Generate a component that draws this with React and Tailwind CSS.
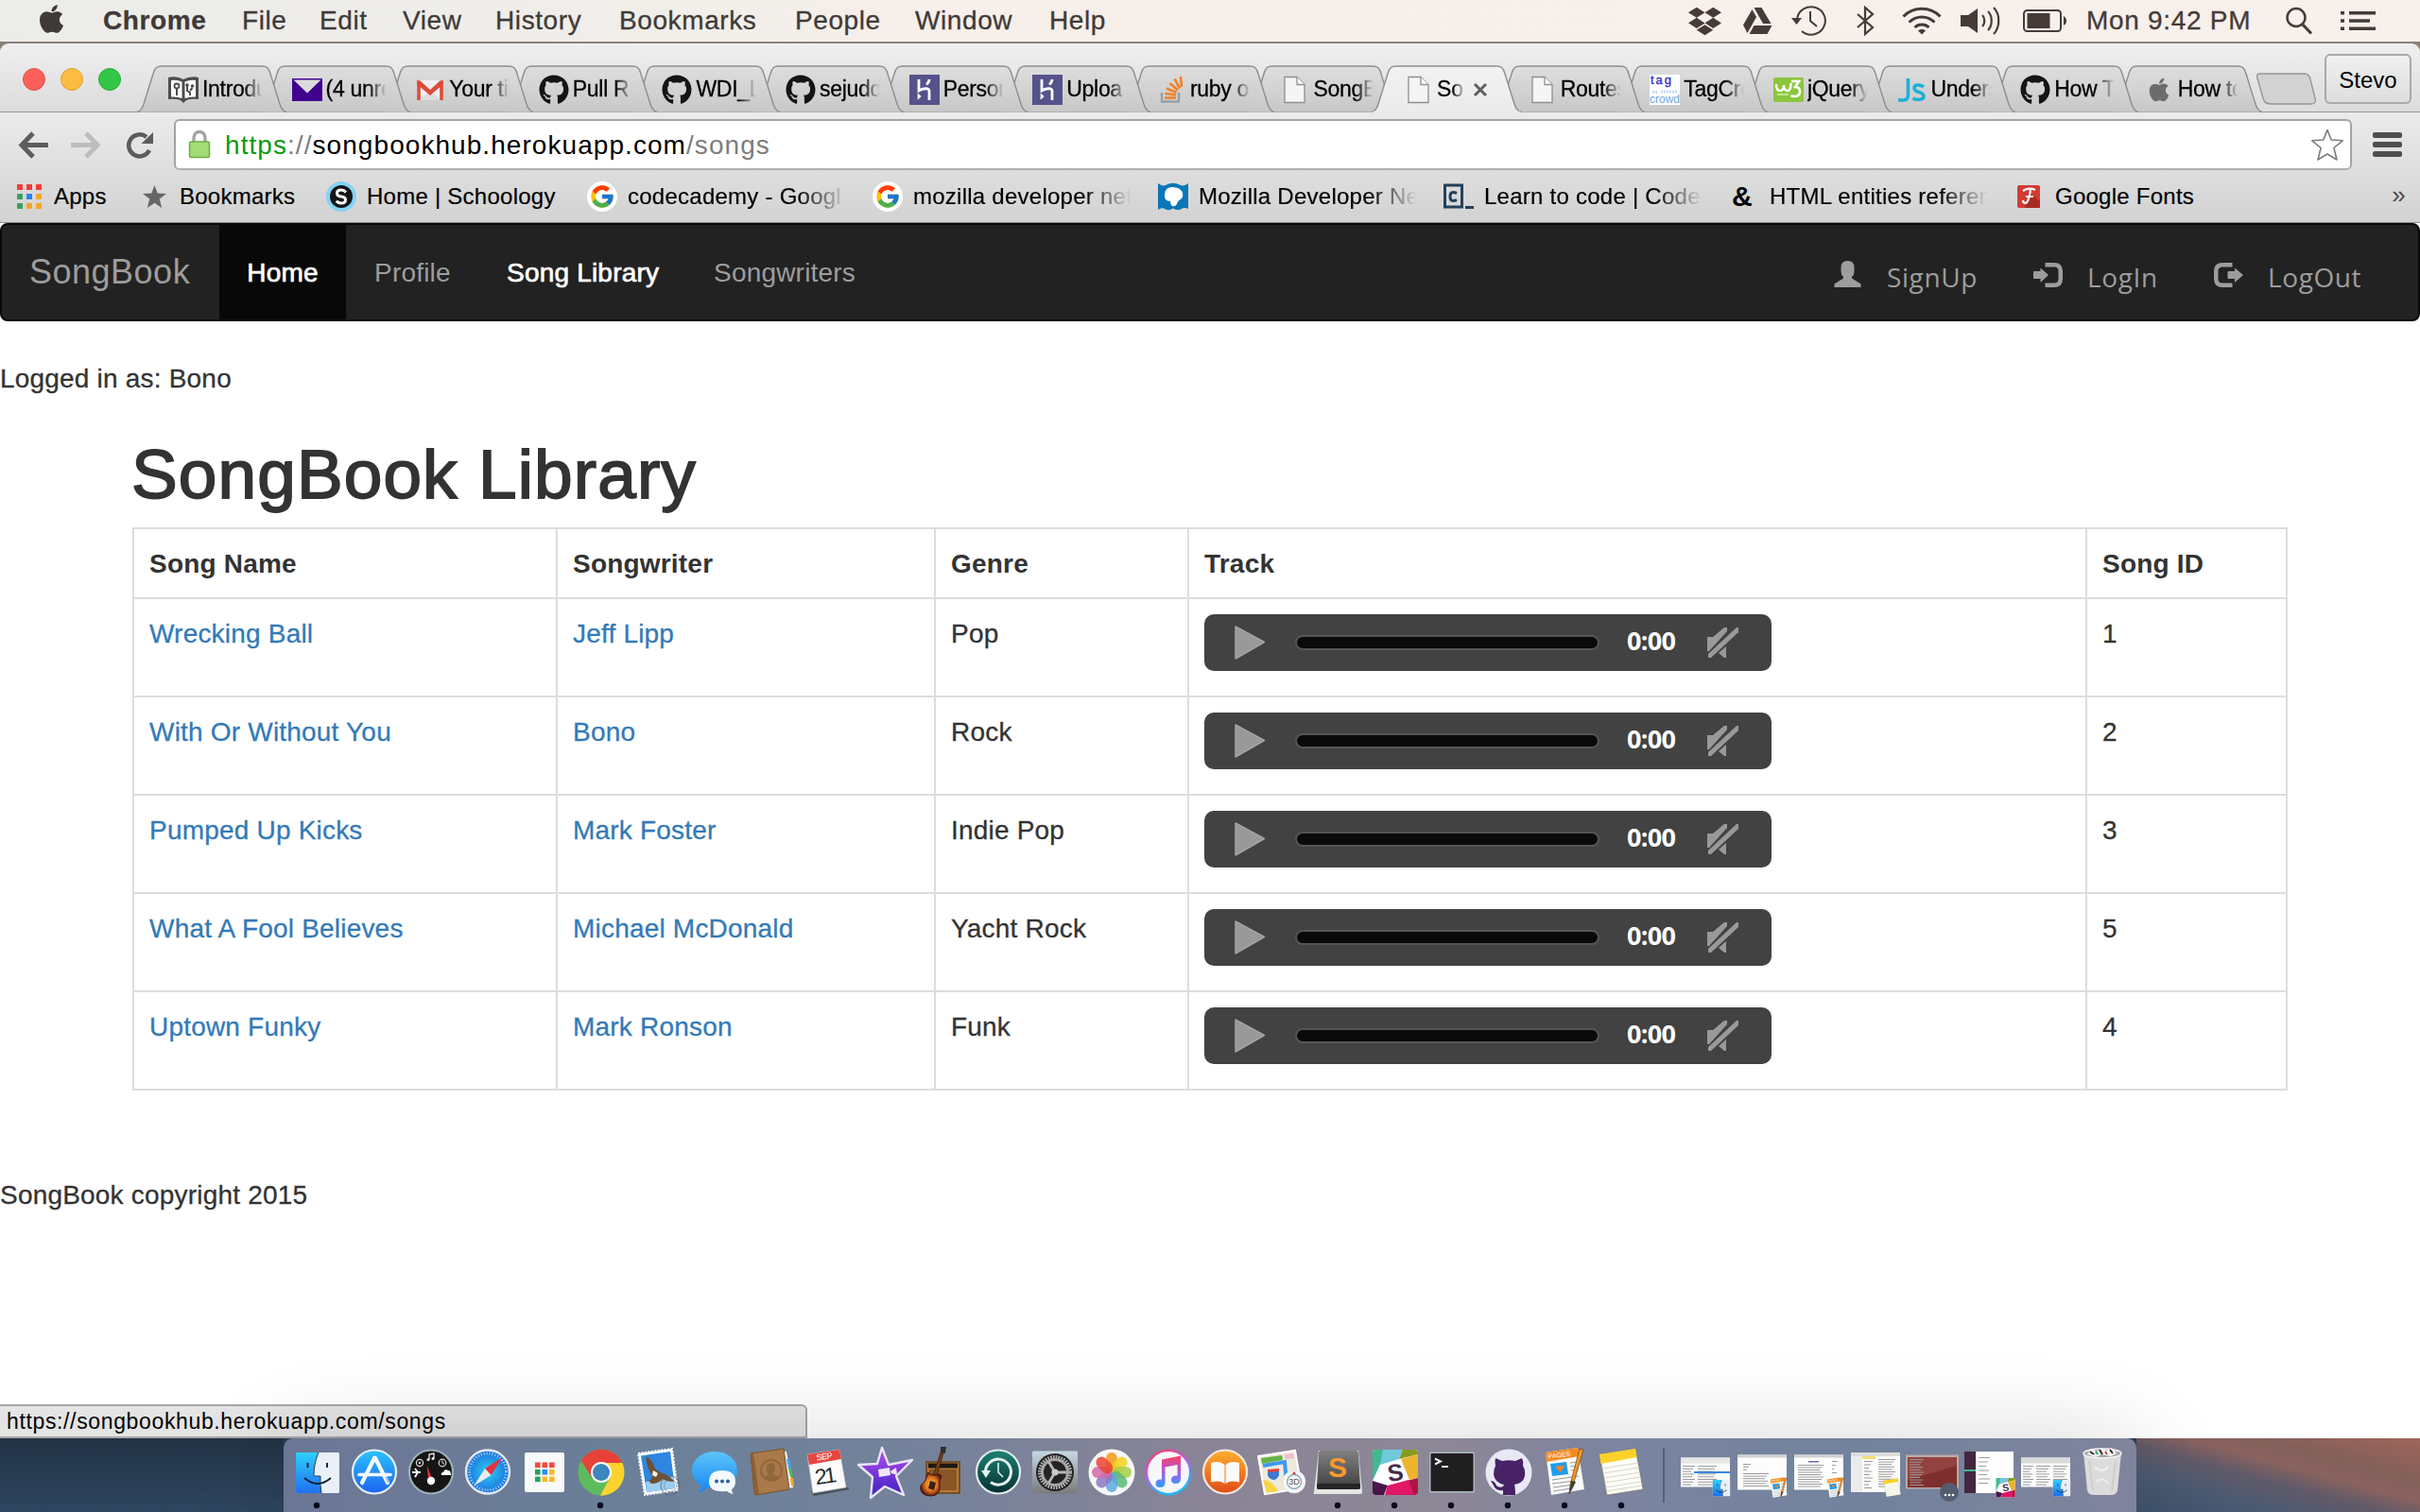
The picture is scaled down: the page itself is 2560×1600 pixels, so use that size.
import React from "react";
import { FaApple, FaDropbox, FaGithub } from "react-icons/fa";
import { FcGoogle } from "react-icons/fc";

const HELV = "font-['Liberation_Sans',Arial,sans-serif]";

/* ---------- menu bar ---------- */

const MENUS = [
  ["Chrome", "w-[147px] font-bold"],
  ["File", "w-[82px]"],
  ["Edit", "w-[88px]"],
  ["View", "w-[98px]"],
  ["History", "w-[131px]"],
  ["Bookmarks", "w-[186px]"],
  ["People", "w-[127px]"],
  ["Window", "w-[142px]"],
  ["Help", "w-[64px]"],
];

function DriveIcon() {
  return (
    <svg className="w-[31px] h-[28px]" viewBox="0 0 31 28" fill="#463b36">
      <path d="M11.500 0h8L29.500 17h-8.500z" />
      <path d="M9.500 2L0 18.500l4.500 8.500L14 10z" />
      <path d="M11.500 19h19L25.500 28H6.500z" />
    </svg>
  );
}

function BackupIcon() {
  return (
    <svg className="w-[37px] h-[34px]" viewBox="0 0 37 34" fill="none" stroke="#463b36" strokeWidth="2">
      <path d="M6 15A15 14.700 0 1 1 11 28" />
      <path d="M0 14h11l-5.500 7z" fill="#463b36" stroke="none" />
      <path d="M20 7v10l7 6" />
    </svg>
  );
}

function BluetoothIcon() {
  return (
    <svg className="w-[20px] h-[32px]" viewBox="0 0 20 32" fill="none" stroke="#463b36" strokeWidth="2.200">
      <path d="M2 9l16 14-8 7V2l8 7L2 23" />
    </svg>
  );
}

function WifiIcon() {
  return (
    <svg className="w-[42px] h-[30px]" viewBox="0 0 42 30" fill="none" stroke="#463b36" strokeWidth="3">
      <path d="M1.500 10.500C12-.5 30-.5 40.500 10.500" />
      <path d="M7.500 16.500c7.500-7.500 19.500-7.500 27 0" />
      <path d="M13.500 22c4-4 11-4 15 0" />
      <path d="M21 29.500l-4-4c2-2 6-2 8 0z" fill="#463b36" stroke="none" />
    </svg>
  );
}

function SpeakerIcon() {
  return (
    <svg className="w-[42px] h-[32px]" viewBox="0 0 42 32" fill="none" stroke="#463b36" strokeWidth="2.200">
      <path d="M0 10h8L18 3v26L8 22H0z" fill="#463b36" stroke="none" />
      <path d="M23 10c3 3 3 9 0 12M29 6c5 5 5 15 0 20M35 2c7 7 7 21 0 28" />
    </svg>
  );
}

function BatteryIcon() {
  return (
    <svg className="w-[47px] h-[24px]" viewBox="0 0 47 24" fill="none" stroke="#463b36" strokeWidth="2">
      <rect x="1" y="1" width="39" height="22" rx="3.500" />
      <rect x="4.500" y="4" width="24" height="16" fill="#463b36" stroke="none" />
      <path d="M43 7c4 2 4 8 0 10z" fill="#463b36" stroke="none" />
    </svg>
  );
}

function MenuBar() {
  return (
    <header className="h-[44px] shrink-0 flex items-center text-[28px] text-[#3f3a37] bg-[linear-gradient(to_right,#ececea_0%,#f0eee9_25%,#f7efea_40%,#f8f0eb_100%)]">
      <FaApple className="ml-[40px] w-[29px] h-[34px] mb-[4px]" />
      <nav className="flex ml-[40px] tracking-[0.600px] [-webkit-text-stroke:0.3px_#3f3a37]">
        {MENUS.map(([name, cls]) => (
          <span key={name} className={cls}>{name}</span>
        ))}
      </nav>
      <div className="ml-auto flex items-center text-[#463b36]">
        <FaDropbox className="w-[35px] h-[35px] mr-[23px]" />
        <DriveIcon />
        <span className="w-[20px]" />
        <BackupIcon />
        <span className="w-[31px]" />
        <BluetoothIcon />
        <span className="w-[29px]" />
        <WifiIcon />
        <span className="w-[20px]" />
        <SpeakerIcon />
        <span className="w-[24px]" />
        <BatteryIcon />
        <span className="ml-[20px] w-[211px] tracking-[0.700px] whitespace-nowrap [-webkit-text-stroke:0.3px_#3f3a37]">Mon 9:42 PM</span>
        <svg className="w-[29px] h-[30px]" viewBox="0 0 29 30" fill="none" stroke="#463b36" strokeWidth="2.500">
          <circle cx="11" cy="11.500" r="9.500" />
          <path d="M17.500 18.500L27 28.500" strokeWidth="3.200" />
        </svg>
        <svg className="ml-[29px] mr-[46px] w-[38px] h-[20px]" viewBox="0 0 38 20" fill="#463b36">
          <path d="M0 0h4v3.600H0zM9 0h28v3.600H9zM0 8.200h4v3.600H0zM9 8.200h22v3.600H9zM0 16.400h4V20H0zM9 16.400h28V20H9z" />
        </svg>
      </div>
    </header>
  );
}

/* ---------- tab strip ---------- */

function PageIcon() {
  return (
    <svg className="w-[32px] h-[32px]" viewBox="0 0 32 32">
      <path d="M6 2.500h13l8 8V29.500H6z" fill="#f5f5f5" stroke="#8f8f8f" strokeWidth="1.300" />
      <path d="M19 2.500v8h8" fill="#fff" stroke="#8f8f8f" strokeWidth="1.300" />
    </svg>
  );
}

function BookIcon() {
  return (
    <svg className="w-[32px] h-[32px]" viewBox="0 0 32 32">
      <path d="M0 3q9-2 16 2 7-4 16-2v23q-8-1-13 1l-3 3-3-3q-5-2-13-1z" fill="#4c4c4c" />
      <path d="M3 6q6-1 11.500 1.500V25Q9 23 3 23.500zM29 6q-6-1-11.500 1.500V25Q23 23 29 23.500z" fill="#fff" />
      <path d="M9 22v-8M23 22v-3l-3-2v-5M23 17l2.500-3" stroke="#4c4c4c" strokeWidth="2" fill="none" />
      <circle cx="9" cy="12" r="2.500" fill="none" stroke="#4c4c4c" strokeWidth="1.800" />
      <circle cx="20" cy="11" r="1.800" fill="#4c4c4c" />
      <circle cx="25.500" cy="12" r="1.800" fill="#4c4c4c" />
    </svg>
  );
}

function YMailIcon() {
  return (
    <svg className="w-[32px] h-[32px]" viewBox="0 0 32 32">
      <rect y="4" width="32" height="24" fill="#400090" />
      <path d="M1.500 5.500h29L16 19.500z" fill="#dcdcdc" />
    </svg>
  );
}

function GmailIcon() {
  return (
    <svg className="w-[32px] h-[32px]" viewBox="0 0 32 32">
      <rect x="2" y="6" width="28" height="21" rx="1.500" fill="#f0f0f0" />
      <path d="M4 27l12-10 12 10z" fill="#dedede" />
      <path d="M4 27V9l12 10.500L28 9v18" fill="none" stroke="#dd4b39" strokeWidth="3.600" />
      <path d="M2 8l3-2 11 10L27 6l3 2v2L16 21.500 2 10z" fill="#dd4b39" />
    </svg>
  );
}

function HerokuIcon() {
  return (
    <span className="w-[32px] h-[32px] flex items-center justify-center bg-[#56528a]">
      <svg className="w-[16px] h-[22px]" viewBox="0 0 16 22" fill="none" stroke="#fff" strokeWidth="2.800">
        <path d="M2 0v12c4-2.500 11-3.500 11 0V22M13 0q0 3-3 5.500" />
        <path d="M.7 14.500l4 3.500-4 3.700z" fill="#fff" stroke="none" />
      </svg>
    </span>
  );
}

function TagCrowdIcon() {
  return (
    <svg className="w-[32px] h-[32px]" viewBox="0 0 32 32">
      <rect width="32" height="32" fill="#fff" />
      <text x="1" y="10" fontSize="13" fill="#3a2fc4" textLength="22" stroke="#3a2fc4" strokeWidth=".4">tag</text>
      <path d="M3 18.500h6M12 18h17" stroke="#c3dcf0" strokeWidth="3" strokeDasharray="2 1" />
      <text x="0" y="30" fontSize="12" fill="#6ea7dc" textLength="32">crowd</text>
    </svg>
  );
}

function W3Icon() {
  return (
    <svg className="w-[32px] h-[32px]" viewBox="0 0 32 32">
      <rect y="3" width="32" height="26" rx="2" fill="#8cc63e" />
      <path d="M3 10q0 7 4 7t4-6q0 6 4 6 3.500 0 3.500-8" fill="none" stroke="#fff" strokeWidth="2.400" />
      <path d="M19 7h8l-4 6q5 0 5 5 0 5-6 5-2 0-3.500-1" fill="none" stroke="#fff" strokeWidth="2.600" />
      <path d="M4 21h12" stroke="#d5ebb5" strokeWidth="1.500" />
    </svg>
  );
}

function JsIcon() {
  return (
    <svg className="w-[32px] h-[32px]" viewBox="0 0 32 32" fill="none" stroke="#1cb0d8" strokeWidth="3.600">
      <path d="M11.500 4v17q0 6-5 6H1" />
      <path d="M28 13q-3-2-6-2-4 0-4 3t5 4.500q5 1.500 5 4.500t-5 3.500q-4 0-6.500-1.500" />
    </svg>
  );
}

const Hub = () => <FaGithub className="w-[32px] h-[32px] text-[#141414]" />;
const Stack = () => (
  <span className="w-[32px] h-[32px] flex items-center justify-center">
    <svg className="w-[24px] h-[28px]" viewBox="0 0 24 28" fill="none">
      <path d="M2 17v9.500h18V17" stroke="#9aa0a6" strokeWidth="2.400" />
      <path d="M5 22.500h12M5.500 18l11.500 1.500M7 12.500L17.500 17M10.500 7l8.500 7.500M15.500 2.500l5.500 10M22 0l1 11" stroke="#f48024" strokeWidth="2.600" />
    </svg>
  </span>
);
const AppleFav = () => (
  <span className="w-[32px] h-[32px] flex items-center justify-center"><FaApple className="w-[22px] h-[28px] text-[#6c6c6c]" /></span>
);

const TABS = [
  [BookIcon, "Introdu"], [YMailIcon, "(4 unre"], [GmailIcon, "Your ti"], [Hub, "Pull R"],
  [Hub, "WDI_L"], [Hub, "sejudd"], [HerokuIcon, "Person"], [HerokuIcon, "Uploa"], [Stack, "ruby o"],
  [PageIcon, "SongB"], [PageIcon, "So"], [PageIcon, "Routes"], [TagCrowdIcon, "TagCro"],
  [W3Icon, "jQuery"], [JsIcon, "Unders"], [Hub, "How T"], [AppleFav, "How to"],
];
const ACTIVE = 10;

function Tab({ Icon, label, index }) {
  const active = index === ACTIVE;
  return (
    <div className="relative w-[158px] h-[50px] mr-[-27.4px] shrink-0 flex items-center pl-[33px] pt-[1px]" style={{ zIndex: active ? 30 : 20 - index }}>
      <svg className="absolute inset-0 w-[158px] h-[51px]" viewBox="0 0 158 51">
        <defs>
          <linearGradient id={`tab${index}`} x1="0" y1="0" x2="0" y2="1">
            <stop offset="0" stopColor={active ? "#f2f2f2" : "#dedede"} />
            <stop offset="1" stopColor={active ? "#ebebeb" : "#c8c8c8"} />
          </linearGradient>
        </defs>
        <path
          d="M0 49.500C5 48 6 44 8 38L17 9C19 2.500 21 1 26 1H132C137 1 139 2.500 141 9L150 38C152 44 153 48 158 49.500"
          fill={`url(#tab${index})`} stroke="#8e8e8e" strokeWidth="1.400"
        />
        {active && <rect x="1" y="48.800" width="156" height="2.200" fill="#ebebeb" />}
      </svg>
      <span className="relative flex"><Icon /></span>
      <span className={"relative ml-[4px] mb-[2px] overflow-hidden whitespace-nowrap text-[23px] leading-[32px] tracking-[-0.300px] text-black [-webkit-text-stroke:0.3px_black] " + (active ? "w-[30px] [mask-image:linear-gradient(to_right,black_55%,transparent_100%)]" : "w-[65px] [mask-image:linear-gradient(to_right,black_68%,transparent_98%)]")}>
        {label}
      </span>
      {active && (
        <svg className="relative ml-[8px] w-[16px] h-[16px]" viewBox="0 0 16 16" stroke="#5f5f5f" strokeWidth="3">
          <path d="M2 2l12 12M14 2L2 14" />
        </svg>
      )}
    </div>
  );
}

function TabStrip() {
  return (
    <div className="h-[73px] shrink-0 flex items-end rounded-t-[9px] bg-[linear-gradient(#efefef,#dcdcdc)] border-b border-[#979797]">
      <div className="flex gap-[16px] ml-[24px] mb-[22px] w-[121px]">
        <span className="w-[24px] h-[24px] rounded-full bg-[#fc605b] border border-[#e0504b]" />
        <span className="w-[24px] h-[24px] rounded-full bg-[#fdbc40] border border-[#dea034]" />
        <span className="w-[24px] h-[24px] rounded-full bg-[#33c748] border border-[#28aa35]" />
      </div>
      <div className="flex relative -mb-[1px]">
        {TABS.map(([Icon, label], i) => <Tab key={i} Icon={Icon} label={label} index={i} />)}
      </div>
      <svg className="ml-[21px] mb-[7px] w-[64px] h-[34px]" viewBox="0 0 64 34">
        <path d="M5 1H50c5 0 7 1 8 6l5 20c1 4 0 6-4 6H16c-4 0-7-1-8-6L2 6C1 2 2 1 5 1z" fill="#d2d2d2" stroke="#979797" strokeWidth="1.400" />
      </svg>
      <span className="ml-auto mr-[9px] mb-[8px] w-[92px] h-[53px] rounded-[6px] border-2 border-[#a9a9a9] bg-[linear-gradient(#efefef,#dedede)] flex items-center justify-center text-[24px] text-black pt-[2px]">Stevo</span>
    </div>
  );
}

/* ---------- toolbar and bookmarks ---------- */

function Toolbar() {
  return (
    <div className="h-[61px] shrink-0 flex pt-[7px]">
      <svg className="ml-[19px] mt-[13px] w-[33px] h-[29px]" viewBox="0 0 33 29" fill="none" stroke="#5c5c5c" strokeWidth="5">
        <path d="M4 14.500h28M16 2L4 14.500 16 27" />
      </svg>
      <svg className="ml-[22px] mt-[13px] w-[33px] h-[29px]" viewBox="0 0 33 29" fill="none" stroke="#bdbdbd" strokeWidth="5">
        <path d="M1 14.500h28M17 2l12 12.500L17 27" />
      </svg>
      <svg className="ml-[26px] mt-[13px] w-[30px] h-[29px]" viewBox="0 0 30 29">
        <path d="M25 20A11.500 11.500 0 1 1 22 6" fill="none" stroke="#5c5c5c" strokeWidth="4.500" />
        <path d="M29 1v12H16.500z" fill="#5c5c5c" />
      </svg>
      <div className="ml-[21px] w-[2304px] h-[54px] rounded-[6px] border-2 border-[#a3a3a3] border-b-[#b0b0b0] bg-white flex items-center">
        <svg className="ml-[13px] w-[24px] h-[32px]" viewBox="0 0 24 32">
          <path d="M6 15V8.500a6 6 0 0 1 12 0V15" fill="none" stroke="#a5a5a5" strokeWidth="3.400" />
          <rect x="1.500" y="13" width="21" height="16.500" rx="1.500" fill="#a3db75" stroke="#71ac43" strokeWidth="1.500" />
        </svg>
        <span className="ml-[15px] text-[28px] tracking-[1.060px] whitespace-nowrap mt-[1px]">
          <span className="text-[#0a9a13]">https</span><span className="text-[#7d7d7d]">://</span>
          <span className="text-black">songbookhub.herokuapp.com</span><span className="text-[#7d7d7d]">/songs</span>
        </span>
        <svg className="ml-auto mr-[6px] w-[36px] h-[35px]" viewBox="0 0 36 35" fill="#fff" stroke="#7c7c7c" strokeWidth="1.600" strokeLinejoin="round">
          <path d="M18 1.500l4.200 10.500 12 .8-9.300 7.700 3.100 12.500L18 27 8 33l3.100-12.500L1.800 12.800l12-.8z" />
        </svg>
      </div>
      <div className="ml-[22px] mt-[14px] flex flex-col gap-[4px]">
        <span className="w-[31px] h-[6px] rounded-[2px] bg-[#4e4e4e]" />
        <span className="w-[31px] h-[6px] rounded-[2px] bg-[#4e4e4e]" />
        <span className="w-[31px] h-[6px] rounded-[2px] bg-[#4e4e4e]" />
      </div>
    </div>
  );
}

const APP_DOTS = ["#f23c36", "#f23c36", "#f23c36", "#3aa25c", "#2f82f0", "#f5a623", "#3aa25c", "#f5a623", "#f5a623"];

function AppsIcon() {
  return (
    <span className="grid grid-cols-3 gap-[4px] w-[26px]">
      {APP_DOTS.map((c, i) => <span key={i} className="w-[6px] h-[6px]" style={{ background: c }} />)}
    </span>
  );
}

const GoogleG = () => (
  <span className="w-[32px] h-[32px] rounded-full bg-white flex items-center justify-center"><FcGoogle className="w-[28px] h-[28px]" /></span>
);

const BOOKMARKS = [
  ["w-[133px]", "w-[39px]", <AppsIcon key="i" />, "Apps", false],
  ["w-[194px]", "w-[39px]", <svg key="i" className="w-[25px] h-[24px]" viewBox="0 0 25 24"><path d="M12.500 0l3.200 8.500 9.300.4-7.300 5.700L20.200 24l-7.700-5.300L4.800 24l2.500-9.400L0 8.900l9.300-.4z" fill="#666" /></svg>, "Bookmarks", false],
  ["w-[276px]", "w-[43px]", (
    <svg key="i" className="w-[32px] h-[32px]" viewBox="0 0 32 32">
      <circle cx="16" cy="16" r="16" fill="#84d3f5" />
      <circle cx="16" cy="16" r="12" fill="#151515" />
      <path d="M21 11.500q-2-2.500-5-2.500-4.500 0-4.500 3.500 0 3 4.500 3.500t4.500 3.500q0 3.500-4.500 3.500-3.500 0-5-2.500" fill="none" stroke="#fff" strokeWidth="3" />
    </svg>
  ), "Home | Schoology", false],
  ["w-[302px]", "w-[43px]", <GoogleG key="i" />, "codecademy - Googl", true],
  ["w-[302px]", "w-[43px]", <GoogleG key="i" />, "mozilla developer net", true],
  ["w-[302px]", "w-[43px]", (
    <svg key="i" className="w-[32px] h-[30px]" viewBox="0 0 32 30">
      <path d="M0 1q5 4 9 1.500Q16-1 23 2.500q4 2.500 9-1.500v27q-4-2-8 .5-4 2-8-1-4 3-8 1-4-2.500-8 .5z" fill="#0a76b8" />
      <path d="M7 12q1-7 8-7 9 0 11 6 1 5-2 7-3 1-4 5-2 3-5 2-2-2-2-5-7 0-6-8z" fill="#fff" />
    </svg>
  ), "Mozilla Developer Ne", true],
  ["w-[303px]", "w-[43px]", (
    <svg key="i" className="w-[32px] h-[28px]" viewBox="0 0 32 28" fill="none" stroke="#23405a" strokeWidth="3">
      <rect x="1.500" y="2" width="18" height="23" />
      <path d="M14 10.500q-7-3-7 3.500t7 3.500M23 25.500h9" />
    </svg>
  ), "Learn to code | Code", true],
  ["w-[301px]", "w-[42px]", <span key="i" className="ml-[2px] w-[24px] text-[30px] leading-[32px] font-bold text-black">&amp;</span>, "HTML entities referen", true],
  ["w-[300px]", "w-[43px]", (
    <svg key="i" className="ml-[3px] w-[24px] h-[24px]" viewBox="0 0 24 24">
      <rect width="24" height="24" rx="2" fill="#d23c32" />
      <path d="M12 7l12 10v7H8z" fill="#a82b22" />
      <path d="M6 6q6-4 13-1M14 5q-2 13-5 14-3 0-3-3M9 12h8" fill="none" stroke="#fff" strokeWidth="2.200" />
    </svg>
  ), "Google Fonts", false],
];

function BookmarksBar() {
  return (
    <div className="h-[56px] shrink-0 flex items-center pl-[18px] text-[24px] text-black tracking-[0.250px] border-b border-[#8d8d8d]">
      {BOOKMARKS.map(([slot, iconBox, icon, label, fade], i) => (
        <div key={i} className={"flex items-center shrink-0 " + slot}>
          <span className={"flex shrink-0 " + iconBox}>{icon}</span>
          <span className={"whitespace-nowrap overflow-hidden pt-[1px] [-webkit-text-stroke:0.2px_black] " + (fade ? "w-[231px] [mask-image:linear-gradient(to_right,black_78%,transparent_100%)]" : "")}>{label}</span>
        </div>
      ))}
      <span className="ml-auto mr-[15px] text-[26px] text-[#4c4c4c] mb-[2px]">»</span>
    </div>
  );
}

/* ---------- SongBook page ---------- */

function UserGlyph() {
  return (
    <svg className="w-[29px] h-[28px]" viewBox="0 0 29 28" fill="#9d9d9d">
      <path d="M14.500 0q7 0 7 7v4q0 4-2.500 6v1.500l9.500 6V28H.5v-3.500l9.500-6V17q-2.500-2-2.500-6V7q0-7 7-7z" />
    </svg>
  );
}

function LogInGlyph() {
  return (
    <svg className="w-[31px] h-[26px]" viewBox="0 0 31 26" fill="#9d9d9d">
      <path d="M12.500 0H22q9 0 9 9v8q0 9-9 9h-9.500v-4.500H22q4.500 0 4.500-4.500V9q0-4.500-4.500-4.500h-9.500z" />
      <path d="M1 9h6.500V5.500L16 13l-8.500 8v-4H1q-1 0-1-1v-6q0-1 1-1z" />
    </svg>
  );
}

function LogOutGlyph() {
  return (
    <svg className="w-[31px] h-[26px]" viewBox="0 0 31 26" fill="#9d9d9d">
      <path d="M19.500 0H9Q0 0 0 9v8q0 9 9 9h10.500v-4.500H9q-4.500 0-4.500-4.500V9Q4.500 4.500 9 4.500h10.500z" />
      <path d="M15.500 9H22V5.500l9 7.500-9 8v-4h-6.500q-1 0-1-1v-6q0-1 1-1z" />
    </svg>
  );
}

function Navbar() {
  return (
    <nav className="h-[104px] shrink-0 flex border-2 border-[#080808] bg-[#222] rounded-[8px] text-[28px] leading-[40px] text-[#9d9d9d] whitespace-nowrap">
      <span className="w-[230px] pl-[29px] pt-[30px] text-[36px] tracking-[0.500px]">SongBook</span>
      <span className="w-[134px] bg-[#080808] text-white pt-[31px] text-center [-webkit-text-stroke:0.7px_white]">Home</span>
      <span className="w-[140px] pl-[30px] pt-[31px]">Profile</span>
      <span className="w-[219px] pl-[30px] pt-[31px] text-white [-webkit-text-stroke:0.7px_white]">Song Library</span>
      <span className="w-[220px] pl-[30px] pt-[31px]">Songwriters</span>
      <div className="ml-auto flex pt-[38px] font-['Open_Sans',sans-serif] text-[28px] leading-[28px]">
        <span className="flex w-[211px]"><UserGlyph /><span className="ml-[27px] mt-[3px] tracking-[0.6px]">SignUp</span></span>
        <span className="flex w-[191px]"><span className="mt-[2px] flex self-start"><LogInGlyph /></span><span className="ml-[26px] mt-[3px] tracking-[0.6px]">LogIn</span></span>
        <span className="flex w-[216px]"><span className="mt-[2px] flex self-start"><LogOutGlyph /></span><span className="ml-[26px] mt-[3px] tracking-[0.6px]">LogOut</span></span>
      </div>
    </nav>
  );
}

function AudioPlayer() {
  return (
    <div className="w-[600px] h-[60px] rounded-[10px] bg-[#424242] flex items-center">
      <svg className="ml-[32px] w-[33px] h-[36px]" viewBox="0 0 33 36">
        <path d="M1 1L31.500 17.500 1 35z" fill="#999" stroke="#a3a3a3" strokeWidth="1.500" strokeLinejoin="round" />
      </svg>
      <span className="ml-[31px] w-[322px] h-[16px] rounded-full bg-[#0a0a0a] border-2 border-[#555]" />
      <span className="ml-[29px] mb-[4px] w-[57px] font-['Open_Sans',sans-serif] font-bold text-[27px] leading-[30px] tracking-[-0.700px] text-white whitespace-nowrap">0:00</span>
      <svg className="ml-[28px] w-[34px] h-[36px]" viewBox="0 0 34 36" fill="#999">
        <path d="M0 12h6L18 2h3v4L2 27H0z" />
        <path d="M31 2h2v5L4 34H1v-4z" />
        <path d="M20 22v12h-2l-6-5z" />
      </svg>
    </div>
  );
}

const SONGS = [
  ["Wrecking Ball", "Jeff Lipp", "Pop", "1"],
  ["With Or Without You", "Bono", "Rock", "2"],
  ["Pumped Up Kicks", "Mark Foster", "Indie Pop", "3"],
  ["What A Fool Believes", "Michael McDonald", "Yacht Rock", "5"],
  ["Uptown Funky", "Mark Ronson", "Funk", "4"],
];

function SongTable() {
  const cell = "border-r-2 border-b-2 border-[#ddd] px-[16px] ";
  return (
    <div className="ml-[140px] w-[2280px] border-t-2 border-l-2 border-[#ddd] grid grid-cols-[448px_400px_268px_950px_212px]">
      {["Song Name", "Songwriter", "Genre", "Track", "Song ID"].map((h) => (
        <div key={h} className={cell + "h-[74px] pt-[17px] font-bold"}>{h}</div>
      ))}
      {SONGS.map(([song, writer, genre, id]) => (
        <React.Fragment key={id}>
          <div className={cell + "h-[104px] pt-[17px] text-[#337ab7] [-webkit-text-stroke:0.3px_#337ab7]"}>{song}</div>
          <div className={cell + "h-[104px] pt-[17px] text-[#337ab7] [-webkit-text-stroke:0.3px_#337ab7]"}>{writer}</div>
          <div className={cell + "h-[104px] pt-[17px] [-webkit-text-stroke:0.3px_#333]"}>{genre}</div>
          <div className={cell + "h-[104px] pt-[16px]"}><AudioPlayer /></div>
          <div className={cell + "h-[104px] pt-[17px] [-webkit-text-stroke:0.3px_#333]"}>{id}</div>
        </React.Fragment>
      ))}
    </div>
  );
}

function Page() {
  return (
    <main className="relative grow bg-white text-[28px] leading-[40px] tracking-[0.200px] text-[#333] flex flex-col">
      <Navbar />
      <p className="mt-[41px] [-webkit-text-stroke:0.3px_#333]">Logged in as: Bono</p>
      <h1 className="ml-[139px] mt-[41px] mb-[18px] h-[78px] text-[73px] leading-[79px] tracking-[1.100px] [-webkit-text-stroke:1.8px_#333]">SongBook Library</h1>
      <SongTable />
      <p className="mt-[91px] [-webkit-text-stroke:0.3px_#333]">SongBook copyright 2015</p>
      <div className="absolute left-0 bottom-0 w-[854px] h-[36px] border-2 border-l-0 border-[#a8a8a8] rounded-tr-[6px] bg-[#e4e4e4] flex items-center pl-[7px] text-[23px] leading-[30px] text-black tracking-[0.640px]">
        https://songbookhub.herokuapp.com/songs
      </div>
    </main>
  );
}

/* ---------- dock ---------- */

function DockIcon({ children, running }) {
  return (
    <svg className="w-[60px] h-[78px] shrink-0" viewBox="0 0 60 78">
      {children}
      {running && <circle cx="29" cy="71" r="3.200" fill="#05081c" />}
    </svg>
  );
}

function FinderFace() {
  return (
    <g>
      <rect x="7" y="15" width="46" height="43" rx="1.500" fill="#e9f0f7" />
      <path d="M31 15H8.500Q7 15 7 16.500v40Q7 58 8.500 58H34q-1.500-8-1-18h-7q0-14 5-25z" fill="url(#gFinder)" />
      <path d="M31 15q-5 11-5 25h7q-.5 10 1 18" fill="none" stroke="#23405f" strokeWidth="1" />
      <path d="M19.500 26v5M40 26v5" stroke="#1b2b3c" strokeWidth="2" />
      <path d="M16 42q14 12 28 0" fill="none" stroke="#10222f" strokeWidth="1.800" />
    </g>
  );
}

function PagesArt() {
  return (
    <g>
      <path d="M9 15l34-5 7 44-35 6z" fill="#fafafa" />
      <path d="M9 15l34-5 1.500 9L10 25z" fill="#f68b1f" />
      <text x="12" y="21.500" fontSize="7" fill="#fff" transform="rotate(-7 12 21)">PAGES</text>
      <path d="M14 27l17-2 2 13-17 2z" fill="#1f9cf0" />
      <path d="M19 30l5-1 5 0-4 7z" fill="#f58220" />
      <path d="M35 26l8-1M35 30l8-1M36 34l8-1M16 44l28-4M16 48l24-3M17 52l22-3M17 56l19-3" stroke="#999" strokeWidth="1" />
      <path d="M45 11l4 1-11 38-4 9 1-10z" fill="#f59a23" stroke="#6f4a1a" strokeWidth=".8" />
      <path d="M36 45l5 1-3 6-4 7z" fill="#3c3c3c" />
    </g>
  );
}

function SlackArt() {
  return (
    <g>
      <rect x="6" y="12" width="48" height="48" rx="3" fill="#fff" />
      <path d="M9 12h12L6 45V15q0-3 3-3z" fill="#3eb991" />
      <path d="M17 12h21l-4 10-20 6z" fill="#70cadb" />
      <path d="M38 12h13q3 0 3 3v2l-20 5z" fill="#889a1c" />
      <path d="M54 17v25l-9 2-9-22z" fill="#ecb32d" />
      <path d="M54 42v15q0 3-3 3h-5l-4-15z" fill="#b01540" />
      <path d="M22 50l22-6 6 16H19z" fill="#e01765" />
      <path d="M6 45l16 5-4 10H9q-3 0-3-3z" fill="#4a154b" />
      <text x="30" y="45" fontSize="25" fontWeight="bold" textAnchor="middle" fill="#472a49" transform="rotate(-8 30 36)">S</text>
    </g>
  );
}

function NotesArt() {
  return (
    <g>
      <path d="M6 17l38-6 8 43-38 6z" fill="#fdfdf6" stroke="#7d7852" strokeWidth=".6" />
      <path d="M6 17l38-6 1.500 9L7.500 27z" fill="#fcd12a" />
      <path d="M9 32l38-6M10 37l38-6M11 42l38-6M11.500 47l38-6M12 52l38-6M13 56l38-6" stroke="#d6d6d0" strokeWidth="1" />
    </g>
  );
}

function lines(x, y, n, step, w) {
  return Array.from({ length: n }, (_, i) => (
    <rect key={i} x={x} y={y + i * step} width={w - ((i * 7) % 5)} height="1" fill="#9b9b9b" />
  ));
}

const PETALS = ["#f7981d", "#f2d31b", "#a8cf45", "#5dbb75", "#5aa9e0", "#8c78c4", "#d66aa8", "#ea4335"];

function Dock() {
  const star = "M27 12l7 18 25-5-17 17 8 20-20-9-15 12 2-22L2 30l20-1z";
  return (
    <div className="relative z-10 w-[1960px] h-[78px] flex rounded-t-[10px] pl-[6px] shadow-[0_10px_100px_rgba(0,0,0,0.2)] bg-[linear-gradient(to_right,#6b7695_0%,#6b8099_20%,#75829b_35%,#8a8496_50%,#8d8797_63%,#7b84a0_72%,#72829d_85%,#80849c_100%)]">
      <svg className="w-0 h-0">
        <defs>
          <linearGradient id="gFinder" x1="0" y1="0" x2="0" y2="1"><stop offset="0" stopColor="#2fd0fa" /><stop offset="1" stopColor="#1f6ff0" /></linearGradient>
          <linearGradient id="gBlue" x1="0" y1="0" x2="0" y2="1"><stop offset="0" stopColor="#2ac3fb" /><stop offset="1" stopColor="#1e62f0" /></linearGradient>
          <linearGradient id="gMsg" x1="0" y1="0" x2="0" y2="1"><stop offset="0" stopColor="#5cc5fb" /><stop offset="1" stopColor="#1687f3" /></linearGradient>
          <linearGradient id="gPurple" x1="0" y1="0" x2="0" y2="1"><stop offset="0" stopColor="#b84ff2" /><stop offset="1" stopColor="#3b20c0" /></linearGradient>
          <linearGradient id="gOrange" x1="0" y1="0" x2="0" y2="1"><stop offset="0" stopColor="#fdb02f" /><stop offset="1" stopColor="#e04a16" /></linearGradient>
          <linearGradient id="gTunes" x1="0" y1="0" x2=".4" y2="1"><stop offset="0" stopColor="#fb4057" /><stop offset=".5" stopColor="#b65df0" /><stop offset="1" stopColor="#22b9f7" /></linearGradient>
          <linearGradient id="gNote" x1="0" y1="0" x2="0" y2="1"><stop offset="0" stopColor="#fb3f5f" /><stop offset=".55" stopColor="#a55df0" /><stop offset="1" stopColor="#2aa4f7" /></linearGradient>
          <linearGradient id="gSteel" x1="0" y1="0" x2="0" y2="1"><stop offset="0" stopColor="#c6d8e3" /><stop offset="1" stopColor="#7a7b7d" /></linearGradient>
          <radialGradient id="gSafari"><stop offset="0" stopColor="#2bd0ee" /><stop offset="1" stopColor="#1b6fe0" /></radialGradient>
          <radialGradient id="gGuitar"><stop offset="0" stopColor="#fbb53a" /><stop offset=".6" stopColor="#e0701c" /><stop offset="1" stopColor="#5a1d0c" /></radialGradient>
          <linearGradient id="gTeal" x1="0" y1="0" x2="0" y2="1"><stop offset="0" stopColor="#1f8276" /><stop offset="1" stopColor="#042f30" /></linearGradient>
          <linearGradient id="gSub" x1="0" y1="0" x2="0" y2="1"><stop offset="0" stopColor="#808080" /><stop offset="1" stopColor="#3e3e3e" /></linearGradient>
        </defs>
      </svg>
      <DockIcon running><FinderFace /></DockIcon>
      <DockIcon>
        <circle cx="30" cy="35.500" r="23" fill="url(#gBlue)" stroke="#e9eef5" strokeWidth="2.200" />
        <path d="M31 21l13 26M30 21L17 47" stroke="#f4f9ff" strokeWidth="4.200" strokeLinecap="round" />
        <path d="M14 38.500h33" stroke="#f4f9ff" strokeWidth="3.600" strokeLinecap="round" />
        <path d="M42 41l3 6" stroke="#5b96e8" strokeWidth="1" />
      </DockIcon>
      <DockIcon>
        <circle cx="30" cy="35.500" r="23" fill="#151515" stroke="#9db0ba" strokeWidth="2.200" />
        <circle cx="18" cy="26" r="3.600" fill="none" stroke="#ddd" strokeWidth="1.200" /><circle cx="18" cy="26" r="1.200" fill="#ddd" />
        <circle cx="42" cy="26" r="3.800" fill="none" stroke="#ddd" strokeWidth="1.200" /><path d="M42 23.500V26l2 1.500" stroke="#ddd" fill="none" />
        <path d="M28 22v-5l5-1v5" fill="none" stroke="#eee" strokeWidth="1.300" /><circle cx="27" cy="22.500" r="1.500" fill="#eee" /><circle cx="32" cy="21.500" r="1.500" fill="#eee" />
        <path d="M10 36h9M13 32l3 4-3 5" stroke="#fff" strokeWidth="1.800" fill="none" />
        <path d="M41 39q-1-3 2-3 1-4 5-2 3 0 3 5z" fill="#fff" />
        <path d="M25.500 28l6 17-4 1z" fill="#f0323c" />
        <circle cx="30" cy="45" r="4.200" fill="#fff" />
      </DockIcon>
      <DockIcon>
        <circle cx="30" cy="35.500" r="23" fill="url(#gSafari)" stroke="#e6eaf0" strokeWidth="2.400" />
        <circle cx="30" cy="35.500" r="19.500" fill="none" stroke="#d6ecff" strokeWidth="3" strokeDasharray=".8 2.200" />
        <path d="M45.500 20L33.500 39 27 32z" fill="#e8313a" />
        <path d="M15 50.500L27 32l6.500 7z" fill="#e8edf2" />
      </DockIcon>
      <DockIcon>
        <rect x="9" y="15" width="42" height="42" rx="2" fill="#f9f9f9" />
        {["#f4483f", "#f4483f", "#f4483f", "#24a35a", "#2f8ff0", "#fbb929", "#24a35a", "#fbb929", "#fbb929"].map((c, i) => (
          <rect key={i} x={20 + (i % 3) * 7.5} y={25.5 + Math.floor(i / 3) * 7.5} width="5.600" height="5.600" fill={c} />
        ))}
      </DockIcon>
      <DockIcon running>
        <circle cx="30" cy="36" r="24.500" fill="#5dbb5d" />
        <path d="M8.800 23.800A24.500 24.500 0 0 1 52.300 26H30l-10 15.500z" fill="#e8413a" />
        <path d="M52.300 26A24.500 24.500 0 0 1 29 60.500L39.500 41.500 34 26z" fill="#fcd22f" />
        <circle cx="30" cy="36" r="11" fill="#fff" />
        <circle cx="30" cy="36" r="9" fill="#3b86bd" />
      </DockIcon>
      <DockIcon>
        <path d="M9 16l36-5 6 44-35 5z" fill="#fff" stroke="#fff" strokeWidth="2" strokeDasharray="2 1.500" />
        <path d="M12 18.500l31-4.500 5 39-30 4z" fill="#2e86e0" />
        <path d="M17 46l29-6 2 13-30 4z" fill="#9dcdf2" />
        <path d="M17 19q7 3 10 13 5 5 11 6 6 3 9 8-8 0-12-3-4 5-12 5l-3-3q4-2 4-5-6-9-7-21z" fill="#6f5031" />
        <path d="M25 34l5 3-2 4-4-2z" fill="#f5efe2" />
        <circle cx="43" cy="50" r="10" fill="none" stroke="#51606f" strokeWidth="1.200" opacity=".6" />
        <circle cx="43" cy="50" r="6.500" fill="none" stroke="#51606f" strokeWidth="1" opacity=".5" />
      </DockIcon>
      <DockIcon>
        <path d="M30 14c13 0 24 8 24 20S43 53 30 53q-5 0-8-1-4 5-9 5 4-4 2-8-9-6-9-15C6 22 17 14 30 14z" fill="url(#gMsg)" />
        <path d="M38 34q14 0 14 12 0 5-4 8 0 3 2 5-4 0-7-3-19 2-19-10 0-12 14-12z" fill="#f2f8fe" />
        <circle cx="32" cy="45.500" r="2" fill="#2a5f9e" /><circle cx="38" cy="45.500" r="2" fill="#2a5f9e" /><circle cx="44" cy="45.500" r="2" fill="#2a5f9e" />
      </DockIcon>
      <DockIcon>
        <path d="M41 13l5 1 7 38-5 1z" fill="#f3f3f3" /><path d="M46 22l3 0 2 10-3 0z" fill="#3fa9f5" /><path d="M48 32l3 0 2 9-3 0z" fill="#55b948" /><path d="M50 42l3 0 1 8-3 0z" fill="#f7a71f" />
        <path d="M8 16l35-5 6 43-35 6q-2 0-2-2z" fill="#a9794a" stroke="#7a5227" strokeWidth="1" />
        <path d="M8 16l3-.5 6 44-4 .5z" fill="#8b5f33" />
        <circle cx="30" cy="34" r="11" fill="none" stroke="#8a6237" strokeWidth="1.500" />
        <path d="M30 26q4 0 4 5 0 3-2 5l1 3q4 1 5 3-8 5-16 1 1-3 4-4v-3q-2-2-1-6 1-4 5-4z" fill="#8f673b" />
      </DockIcon>
      <DockIcon>
        <path d="M12 56l37-5 4 3-38 7z" fill="#333" opacity=".6" />
        <path d="M8 17l34-5 7 40-35 6z" fill="#fbfbfb" stroke="#c9c9c9" strokeWidth=".6" />
        <path d="M8 17l34-5 2 10-34 6z" fill="#e64640" />
        <text x="18" y="23.500" fontSize="9" fill="#fff" textLength="17" transform="rotate(-8 18 23)">SEP</text>
        <text x="17" y="49" fontSize="23" fill="#2a2a2a" textLength="23" transform="rotate(-8 18 48)">21</text>
      </DockIcon>
      <DockIcon>
        <path d={star} transform="translate(0 -2)" fill="url(#gPurple)" stroke="#e8e6f4" strokeWidth="2.400" strokeLinejoin="round" />
        <path d="M23 33l12-2 1 8-12 2zM36 35l6-4 1 8-6-2z" fill="#eee7fa" />
      </DockIcon>
      <DockIcon>
        <rect x="14" y="25" width="35" height="33" fill="#b57a3a" stroke="#6b4118" strokeWidth="1.500" />
        <rect x="16" y="26.500" width="31" height="5" fill="#1c1713" />
        <rect x="17" y="33" width="29" height="22" fill="#8a5527" />
        <path d="M31 10l2 1-10 34-3-1z" fill="#8a4a25" stroke="#5a2c12" strokeWidth="1.500" />
        <path d="M29 9h6l-1 7h-5z" fill="#33302c" />
        <path d="M16 36q2 3 6 3 6-2 8 1-3 5-2 10 1 11-10 11Q6 60 8 50q5-4 6-8 0-4 2-6z" fill="url(#gGuitar)" stroke="#3a1208" strokeWidth="1" />
        <path d="M18 45l6 2-2 8-6-2z" fill="#3a1e10" />
      </DockIcon>
      <DockIcon>
        <circle cx="30" cy="35.500" r="23" fill="url(#gTeal)" stroke="#e3ecec" strokeWidth="2.200" />
        <path d="M16.500 36A13.500 13.500 0 1 1 22 46.500" fill="none" stroke="#e6f3f0" strokeWidth="3" />
        <path d="M12 34h10l-5 8z" fill="#e6f3f0" />
        <path d="M30 26v10l5 5" fill="none" stroke="#e6f3f0" strokeWidth="1.600" />
      </DockIcon>
      <DockIcon>
        <rect x="6" y="13.500" width="48" height="45" rx="1.500" fill="url(#gSteel)" />
        <circle cx="30" cy="36" r="20" fill="#232323" />
        <circle cx="30" cy="36" r="16" fill="none" stroke="#b9b9b9" strokeWidth="4" strokeDasharray="1.600 1.200" />
        <circle cx="30" cy="36" r="13.500" fill="none" stroke="#a5a5a5" strokeWidth="3" />
        <path d="M30 36h12M30 36l-6.500-11M30 36l-6.500 11" stroke="#b5b5b5" strokeWidth="2.800" />
        <circle cx="30" cy="36" r="3.600" fill="#c9c9c9" />
      </DockIcon>
      <DockIcon>
        <circle cx="30" cy="36" r="24.500" fill="#f7f7f7" />
        {PETALS.map((c, i) => (
          <rect key={i} x="24" y="15" width="12" height="20.500" rx="6" fill={c} opacity=".85" transform={`rotate(${i * 45} 30 36)`} />
        ))}
      </DockIcon>
      <DockIcon>
        <circle cx="30" cy="36" r="23.200" fill="#f7f7fa" stroke="url(#gTunes)" strokeWidth="2.600" />
        <path d="M22 23l20-4v24q0 5.500-5.500 5.500-4.500 0-4.500-4 0-4.500 5-4.500h1.500V28.500L25.500 31v16q0 5.500-5.500 5.500-4.500 0-4.500-4 0-4.500 5-4.500H22z" transform="translate(1 -.5)" fill="url(#gNote)" />
      </DockIcon>
      <DockIcon>
        <circle cx="30" cy="35.500" r="23" fill="url(#gOrange)" stroke="#f2e9e4" strokeWidth="2.200" />
        <path d="M15 26q9-3 14.500 2v20q-5-4-14.500-1.500zM45 26q-9-3-14.500 2v20q5-4 14.500-1.500z" fill="#fafafa" />
      </DockIcon>
      <DockIcon>
        <path d="M5 19l39-6 7 40-39 6z" fill="#efe9dc" stroke="#fff" strokeWidth="2" />
        <path d="M8 21l22-3 1 5-22 4z" fill="#66b247" />
        <path d="M33 17l9-1 1 5-9 1z" fill="#f4bccb" />
        <path d="M10 29l23-4 2 22" fill="none" stroke="#3b9af0" strokeWidth="4" />
        <path d="M10 44q10 0 16 12l-12 2z" fill="#f9d548" />
        <path d="M15 34l12-1v6q-2 5-6 5-5-1-6-5z" fill="#3c79cf" /><path d="M15 33l12-1v3l-12 1z" fill="#e0453a" />
        <circle cx="43" cy="46" r="12" fill="#f7f7f7" stroke="#ddd" strokeWidth=".6" />
        <circle cx="43" cy="46" r="7.500" fill="none" stroke="#87a9bf" strokeWidth="1.300" />
        <text x="43" y="49.300" fontSize="9" textAnchor="middle" fill="#555">3D</text>
        <path d="M43 35l2 3h-4z" fill="#e0352b" />
      </DockIcon>
      <DockIcon running>
        <path d="M9 13h42l4 44q0 2-2 2H5q-2 0-1-2z" fill="#e4e4e4" />
        <path d="M12 13h36q3 0 3 3l2 36q0 2-2 2H9q-2 0-2-2l2-36q0-3 3-3z" fill="url(#gSub)" />
        <path d="M7 48h46v4q0 2-2 2H9q-2 0-2-2z" fill="#262626" />
        <text x="29" y="41" fontSize="30" fontWeight="bold" textAnchor="middle" fill="#fb9a2c">S</text>
      </DockIcon>
      <DockIcon running><SlackArt /></DockIcon>
      <DockIcon running>
        <rect x="6" y="14.500" width="48" height="43" rx="2" fill="#aab8bf" />
        <rect x="7.500" y="16" width="45" height="40" rx="1" fill="#1f1f1f" />
        <path d="M12 21.500l6 3-6 3M19 30h7" fill="none" stroke="#f2f2f2" strokeWidth="2" />
      </DockIcon>
      <DockIcon running>
        <circle cx="30" cy="36" r="24.500" fill="#e9e9f6" />
        <path d="M16 21l7 3q7-1.500 14 0l7-3q2 4 1 8 3 5 2 11-2 8-11 9 1 3 1 11H24v-5q-8 1-10-5l-3-5q4 0 6 5 3 3 7 1l1-2q-10-2-11-11 0-5 2-9-1-4 0-8z" fill="#472266" />
      </DockIcon>
      <DockIcon running><PagesArt /></DockIcon>
      <DockIcon running><NotesArt /></DockIcon>
      <span className="w-[28px] shrink-0 flex justify-center pt-[10px]"><span className="w-[2px] h-[58px] bg-[#56607c]" /></span>
      <DockIcon>
        <rect x="4" y="20.500" width="52" height="31" fill="#fbfbfb" /><rect x="4" y="20.500" width="52" height="6" fill="#e6e6e6" />
        {lines(6, 29, 8, 2.8, 13)}{lines(22, 29, 8, 2.8, 20)}
        <rect x="18" y="35" width="38" height="2" fill="#3b86e0" />
        <g transform="translate(35 38) scale(.4)"><FinderFace /></g>
      </DockIcon>
      <DockIcon>
        <rect x="4" y="17.500" width="52" height="37" fill="#fdfdfd" /><rect x="4" y="17.500" width="52" height="3" fill="#d2d2d2" />
        {lines(10, 27, 3, 2.8, 8)}{lines(10, 37, 6, 2.6, 27)}
        <g transform="translate(35 37) scale(.43)"><PagesArt /></g>
      </DockIcon>
      <DockIcon>
        <rect x="4" y="17.500" width="52" height="37" fill="#fdfdfd" /><rect x="4" y="17.500" width="52" height="3" fill="#d2d2d2" />
        <rect x="19" y="24" width="11" height="1.500" fill="#6a6aa8" />{lines(8, 28, 10, 2.5, 27)}{lines(44, 24, 4, 4, 6)}
        <g transform="translate(35 37) scale(.43)"><PagesArt /></g>
      </DockIcon>
      <DockIcon>
        <rect x="4" y="15" width="52" height="42" fill="#fcfcfa" /><rect x="4" y="15" width="52" height="4" fill="#dcdcdc" /><rect x="4" y="19" width="12" height="38" fill="#ececec" />
        <rect x="16" y="19" width="14" height="3" fill="#f8dc7a" />
        {lines(18, 24, 9, 3.5, 9)}{lines(33, 22, 12, 2.6, 18)}
        <g transform="translate(36 38) scale(.4)"><NotesArt /></g>
      </DockIcon>
      <DockIcon>
        <rect x="2" y="17.500" width="56" height="36" fill="#b9aaa8" /><rect x="4" y="20" width="52" height="32" fill="#7e2f2d" />
        <path d="M4 20h52v9L4 44z" fill="#9c4a47" opacity=".7" />
        {lines(6, 22, 11, 2.7, 15)}
        <circle cx="48" cy="57" r="10" fill="#555c70" />
        <circle cx="44" cy="60" r="1.300" fill="#fff" /><circle cx="48" cy="60" r="1.300" fill="#fff" /><circle cx="52" cy="60" r="1.300" fill="#fff" />
      </DockIcon>
      <DockIcon>
        <rect x="4" y="14" width="52" height="44" fill="#fdfdfd" /><rect x="4" y="14" width="12" height="44" fill="#43273f" /><rect x="4" y="33" width="12" height="2" fill="#3eb991" />
        {lines(19, 20, 7, 4.5, 12)}
        <g transform="translate(35 37) scale(.42)"><SlackArt /></g>
      </DockIcon>
      <DockIcon>
        <rect x="4" y="20.500" width="52" height="31" fill="#fbfbfb" /><rect x="4" y="20.500" width="52" height="6" fill="#dadada" />
        {lines(6, 29, 8, 2.8, 11)}{lines(20, 29, 8, 2.8, 15)}{lines(38, 29, 8, 2.8, 15)}
        <g transform="translate(35 38) scale(.4)"><FinderFace /></g>
      </DockIcon>
      <DockIcon>
        <path d="M10 15h40l-4 40q-1 5-7 5H21q-6 0-7-5z" fill="#dcdcdc" />
        <path d="M16 24l4 32M44 24l-4 32" stroke="#cacaca" strokeWidth="1.500" fill="none" />
        <path d="M22 30q8 8 14 0M24 46q6-6 12 2" stroke="#efefef" strokeWidth="2" fill="none" />
        <ellipse cx="30" cy="16" rx="20" ry="5" fill="#a9a9a9" stroke="#f5f5f5" strokeWidth="1.500" />
        <path d="M14 17l4-6 6 3 5-4 5 3 6-3 5 6-6 3-10-2-6 3z" fill="#f6f6f6" />
        <path d="M17 14l4 3M27 12l3 5M38 12l3 4" stroke="#2e2e2e" strokeWidth="2" />
        <path d="M23 14l2 3" stroke="#35a35a" strokeWidth="2" /><path d="M33 14l2 3" stroke="#c8474b" strokeWidth="2" />
      </DockIcon>
    </div>
  );
}

export default function App() {
  return (
    <div className={"w-[2560px] h-[1600px] overflow-hidden flex flex-col bg-[#8c8176] " + HELV}>
      <MenuBar />
      <div className="mt-[2px] h-[1476px] shrink-0 flex flex-col">
        <TabStrip />
        <div className="h-[117px] shrink-0 flex flex-col bg-[linear-gradient(#ebebeb,#d2d2d2)]">
          <Toolbar />
          <BookmarksBar />
        </div>
        <Page />
      </div>
      <div className="h-[78px] shrink-0 flex justify-between bg-[#2b3f56]">
        <div className="w-[300px] bg-[linear-gradient(#223345,#2f4661)]" />
        <Dock />
        <div className="w-[300px] bg-[linear-gradient(195deg,#a0655a_0%,#84605a_28%,#8a635f_42%,#625a68_55%,#4a5a72_75%,#3f536c_100%)]" />
      </div>
    </div>
  );
}
